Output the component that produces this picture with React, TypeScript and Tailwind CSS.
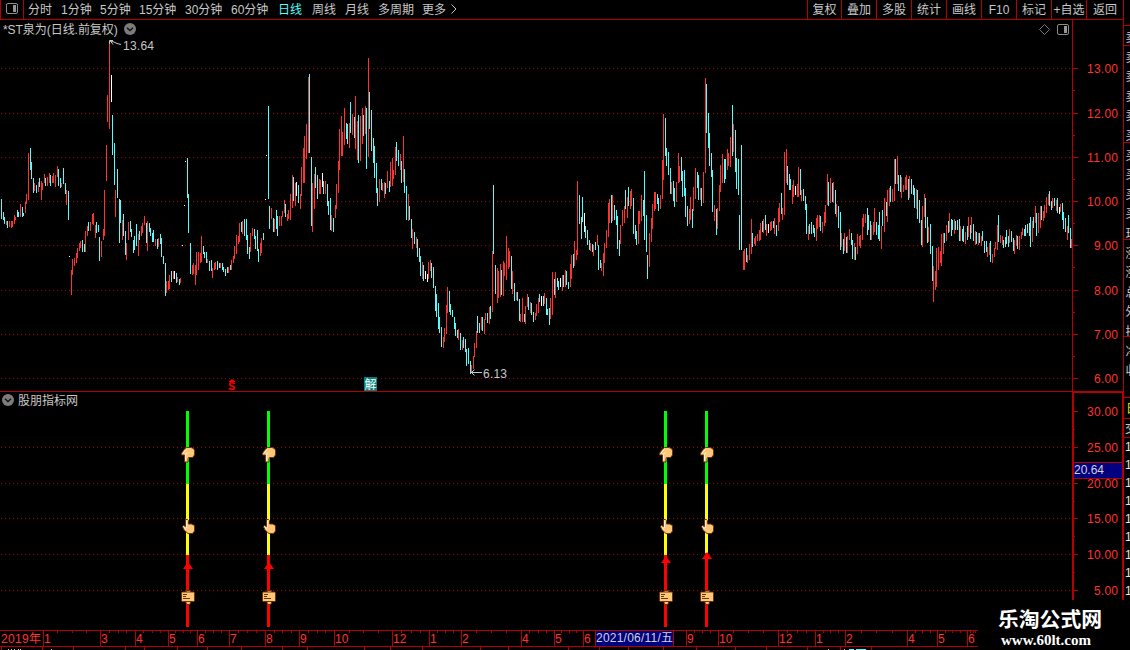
import React from "react";

type Tile = { ox: number; oy: number; data: string };

/* Daily bars: colour letter + column, high, low in thirds of a pixel from the tile origin. */
const TILES: Tile[] = [
  {
    ox: 0,
    oy: 30,
    data: "c4 507 567;c10 546 570;c13 562 582;r19 573 585;c22 573 594;r28 573 591;r34 573 594;r37 573 591;r43 555 582;r46 560 570;c52 540 560;c55 545 560;r61 522 560;c67 531 560;c70 548 558;r76 515 550;r79 491 521;r85 369 510;c91 354 420;c94 396 447;c100 444 489;r103 459 483;c109 465 489;r115 456 486;c118 444 472;r124 453 510;r127 459 480;r133 432 459;c136 444 468;r142 441 468;r148 429 459;c151 435 468;r157 438 459;r160 429 459;r166 435 471;r172 408 440;c175 417 468;c181 444 474;r184 459 472;c190 414 462;c196 459 492;r199 480 525;c205 483 570;w208 678 681;r214 720 795;r217 687 735;r223 684 708;r229 668 699;r232 654 684;r238 640 663;r241 633 654;c247 630 666;c253 642 665;r256 603 665;r262 588 618;c265 576 603;r271 576 603;r277 552 582;r280 549 585;r286 585 624;c289 576 609;c295 585 606;c298 621 693;r304 633 681;r310 597 630;r313 480 618;r319 345 453;r322 195 276;r328 40 297;w334 135 216;c337 255 375;c343 339 465;r346 480 561;c352 417 504;c358 507 639;c361 510 579;r367 570 630;c370 552 618;c376 603 675;r379 639 690;r385 576 630;c391 573 606;c394 597 621;c400 630 669;c403 618 660;c409 582 648;r415 612 678;c418 603 630;r424 588 618;r427 579 608;r433 558 585;c439 579 640;r442 573 663;c448 579 606;c451 594 618;c457 609 636;c460 600 636;r466 627 648;c472 627 657;r475 624 651;c481 612 642;c484 624 681;c490 678 702;c496 699 798;r499 753 789;r505 753 780;r508 735 777;c514 723 756;r520 723 747;w523 723 747;c529 729 759;r532 741 756;c538 747 765;r541 744 759;w547 645 648;w553 525 528;w556 393 396;c562 384 504;c565 492 609;c571 639 732;r577 706 735;r580 699 732;r586 705 765;r589 666 735;r595 666 720;r601 669 699;r604 618 696;c610 648 672;c613 666 684;c619 666 699;r622 687 699;c628 693 723;c634 690 723;r637 714 744;r643 699 720;r646 696 717;c652 693 720;c658 699 714;r661 699 714;c667 699 720;c670 711 726;c676 717 738;c682 711 729;r685 710 729;c691 705 720;r694 690 720;r700 678 699;r703 648 687;r709 615 672;r715 618 642;r718 579 636;c724 576 606;r727 573 612;c733 567 618;c739 567 630;c742 615 672;c748 651 687;r751 609 666;r757 594 618;c763 597 627;c766 618 657;c772 600 663;c775 657 696;r781 639 678;r784 624 669;c790 609 630;w796 507 510;w799 375 378;c805 228 507;c808 528 597;r814 534 567;c820 564 606;r823 567 606;c829 540 597;c832 558 618;r838 558 588",
  },
  {
    ox: 280,
    oy: 40,
    data: "r4 528 558;r7 513 531;r13 480 518;c16 492 531;r22 522 543;r25 510 537;r31 462 540;r37 405 504;c40 411 483;r46 429 498;w49 426 468;c55 435 489;r61 462 507;r64 381 468;r70 324 429;r73 288 429;r79 252 357;r85 111 339;c88 102 339;c94 351 558;r97 429 576;r103 402 507;c106 381 444;c112 405 477;r118 417 462;r121 420 462;w127 399 441;c130 423 462;r136 423 462;c142 432 498;c145 483 525;c151 474 570;r154 525 573;c160 534 576;r166 495 534;r169 432 507;r175 363 459;r178 267 390;r184 228 348;r187 276 348;r193 204 315;c199 249 297;c202 252 312;r208 249 324;c211 186 279;r217 222 285;c223 231 294;r226 168 327;r232 243 360;c235 225 369;r241 228 363;r247 204 312;c250 225 288;r256 198 282;c259 204 387;r265 54 351;c268 156 267;c274 210 333;c280 294 369;c283 318 414;c289 369 459;c292 444 498;r298 417 486;c304 417 450;r307 429 453;r313 426 474;c316 429 462;r322 393 444;c328 423 456;r331 366 441;r337 354 438;r340 390 417;r346 321 405;c349 306 363;c355 330 378;r361 342 390;c364 363 429;r370 288 426;c373 387 459;c379 438 540;r385 462 543;c388 498 540;c394 537 594;r397 567 627;c403 576 612;r409 591 624;c412 597 651;c418 624 666;c421 648 708;r427 666 717;c430 675 723;w436 693 717;w442 702 726;r445 666 717;r451 660 693;c454 669 714;c460 681 744;c466 738 813;c469 762 831;c475 789 867;c478 831 879;c484 861 921;r490 891 924;r493 864 906;r499 795 882;r502 741 819;c508 753 816;c511 792 825;c517 810 831;c523 831 867;c526 849 888;c532 870 894;r535 867 900;c541 879 930;r547 900 930;c550 891 924;c556 897 936;c559 927 978;c565 924 972;c571 963 1002;r574 975 1000;r580 948 987;r583 909 951;r589 873 924;c592 828 879;c598 849 879;r604 831 870;c607 831 873;r613 837 882;r616 819 840;c622 819 849;r628 801 852;c631 798 837;r637 633 816;c640 435 642;c646 675 762;r652 684 789;r655 693 774;r661 672 771;c664 690 765;r670 663 768;r673 669 708;r679 588 720;r685 624 687;r688 633 681;c694 648 747;r697 693 762;c703 729 783;r709 756 780;c712 756 783;c718 777 843;r721 822 846;r727 774 846;c733 822 846;r736 798 852;r742 762 801;c745 771 810;r751 786 819;c754 789 825;c760 816 846;r766 819 840;r769 792 828;r775 774 819;c778 762 786;w784 768 798;c790 768 798;r793 759 792;c799 774 825;c802 807 825;c808 804 855;r811 774 837;r817 696 825;c823 717 765;r826 696 774;c832 714 741;c835 723 750",
  },
  {
    ox: 540,
    oy: 60,
    data: "w61 654 681;r67 645 693;c70 645 681;r76 630 681;c79 633 675;c85 666 687;r91 612 681;r94 585 657;c100 582 624;r103 543 618;r109 570 600;r112 363 585;c118 405 492;c124 471 537;c127 411 486;w133 459 516;c136 498 534;c142 510 555;c148 540 570;r151 549 573;c157 552 576;r160 555 588;c166 546 570;r172 525 558;c175 555 630;c181 600 624;r184 609 633;r190 579 648;r193 549 609;r199 510 564;r205 429 531;r208 417 489;c214 405 489;r217 405 483;c223 435 480;c229 450 495;c232 468 567;c238 540 588;r241 495 552;r247 450 498;r253 438 489;c256 390 447;r262 411 474;c265 381 438;r271 393 447;r274 387 438;c280 414 522;c286 495 537;c289 513 555;r295 453 552;r298 453 492;r304 405 483;c310 420 468;c313 333 540;c319 465 576;c322 585 657;r328 519 621;r334 474 546;r337 432 507;r343 396 453;r346 396 447;c352 402 432;c355 414 453;r361 405 447;r367 300 417;r370 162 360;c376 174 288;c379 264 318;c385 276 345;c391 324 402;r394 366 402;c400 363 423;c403 384 441;r409 366 426;r415 279 369;r418 318 366;c424 291 363;c427 333 411;c433 330 408;c436 384 471;c442 438 498;r448 447 492;r451 411 480;c457 447 504;r460 381 453;r466 324 417;c472 336 384;c475 345 420;r481 384 420;c484 384 438;r490 336 429;r496 54 339;c499 72 219;c505 159 264;c508 219 318;c514 279 351;c517 330 456;r523 435 483;c529 447 525;r532 444 507;r538 375 453;r541 315 396;r547 282 369;c553 297 369;c556 297 357;r562 267 330;r565 279 318;r571 231 321;c577 135 288;r580 192 276;c586 210 336;c589 294 387;c595 297 405;c598 465 570;c604 255 570;r610 573 630;r613 567 630;c619 564 606;r622 585 609;r628 552 600;r634 477 582;c637 519 561;r643 534 552;r646 528 558;r652 522 543;r658 510 543;r661 489 540;c667 483 516;r670 477 519;c676 465 510;r679 492 528;w685 492 519;r691 486 513;r694 483 510;c700 483 504;r703 474 522;c709 495 528;r715 444 513;r718 429 486;c724 399 462;r727 444 480;r733 276 465;r739 267 369;c742 318 375;c748 342 390;c751 357 390;r757 375 432;r760 360 411;w766 378 405;r772 372 411;r775 321 411",
  },
  {
    ox: 800,
    oy: 130,
    data: "c1 117 195;r4 180 213;c10 177 213;c16 198 240;c19 222 312;r25 288 330;c28 282 312;c34 276 312;c40 285 309;c43 294 321;r49 264 333;r52 255 297;r58 255 291;c61 258 303;r67 276 309;r73 246 288;r76 225 279;r82 132 225;c85 156 228;r91 144 219;c97 159 216;r100 156 219;c106 180 252;r109 222 261;c115 228 294;c121 246 360;r124 309 351;c130 327 372;r133 309 363;c139 321 369;r142 318 369;r148 297 330;c154 309 345;c157 330 387;r163 339 390;c166 351 390;r172 312 372;r178 318 348;r181 315 354;r187 264 330;r190 252 291;r196 252 279;c202 234 315;c205 255 300;c211 273 330;r214 285 330;r220 276 315;r223 234 306;c229 276 315;c235 285 327;c238 246 333;r244 288 357;c247 240 288;r253 204 306;c259 216 258;r262 180 276;r268 174 228;c271 168 216;r277 177 216;r283 87 213;c286 87 162;r292 78 162;c295 135 183;c301 135 186;r304 141 204;r310 165 186;r316 141 180;r319 135 180;c325 147 210;r328 138 204;c334 147 192;c340 165 195;c343 174 234;r349 177 237;c352 180 267;c358 210 279;c364 270 345;r367 228 351;r373 192 261;c376 204 294;c382 261 339;r385 291 336;c391 282 372;c397 348 453;r400 408 516;r406 423 480;r409 354 471;r415 351 420;r421 363 399;r424 312 408;r430 309 372;c433 309 339;r439 285 333;c445 273 309;r448 249 306;c454 267 318;c457 270 300;r463 267 312;c466 273 300;c472 270 300;c478 267 333;r481 288 333;c487 297 333;c490 288 336;r496 306 342;c502 288 330;r505 261 321;c511 285 327;r514 261 309;c520 282 333;r526 303 345;c529 306 342;r535 309 345;c538 309 339;r544 318 348;c547 303 333;c553 333 369;c559 333 366;r562 351 381;r568 339 375;c571 333 396;r577 372 399;r583 354 381;r586 336 357;r592 285 360;c595 255 336;r601 315 339;r607 318 345;c610 330 354;c616 321 351;c619 300 342;c625 318 351;r628 297 339;c634 303 336;c640 324 363;r643 330 372;r649 315 348;c652 318 357;r658 318 360;r664 306 327;r667 294 315;c673 297 318;c676 285 318;c682 282 309;c688 279 318;c691 261 351;r697 273 336;c700 261 294;r706 228 279;c709 249 318;r715 249 309;r721 228 294;c724 228 270;r730 243 273;r733 225 264;r739 201 249;r745 192 225;c748 183 228;c754 213 240;r757 204 234;c763 204 228;r769 210 243;c772 204 249;w778 231 252;r781 222 246;c787 219 270;c790 246 297;c796 264 306;r802 288 330;c805 255 309;c811 294 354;r814 327 354",
  },
];

const COLORS: Record<string, string> = { c: "#54fcfc", r: "#ff3232", w: "#ffffff" };

const BARS = TILES.flatMap(({ ox, oy, data }) =>
  data.split(";").map((entry) => {
    const [x, top, bottom] = entry.slice(1).split(" ").map(Number);
    const y = oy + Math.round(top / 3);
    return { x: ox + Math.floor(x / 3), y, h: oy + Math.round(bottom / 3) - y, fill: COLORS[entry[0]] };
  }),
);

const PRICE_TICKS = [
  { y: 68, label: "13.00" },
  { y: 113, label: "12.00" },
  { y: 157, label: "11.00" },
  { y: 201, label: "10.00" },
  { y: 245, label: "9.00" },
  { y: 290, label: "8.00" },
  { y: 334, label: "7.00" },
  { y: 378, label: "6.00" },
];

const SIGNAL_TICKS = [
  { y: 411, label: "30.00" },
  { y: 447, label: "25.00" },
  { y: 483, label: "20.00" },
  { y: 518, label: "15.00" },
  { y: 554, label: "10.00" },
  { y: 590, label: "5.00" },
];

const SIGNALS = [
  { x: 186, arrow: 563, red: 555 },
  { x: 267, arrow: 563, red: 555 },
  { x: 664, arrow: 557, red: 555 },
  { x: 705, arrow: 553, red: 553 },
];

const MONTHS: [number, string][] = [
  [43, "1"], [100, "3"], [135, "4"], [168, "5"], [197, "6"], [229, "7"], [265, "8"], [299, "9"],
  [334, "10"], [392, "12"], [429, "1"], [461, "2"], [521, "4"], [554, "5"], [583, "6"],
  [686, "9"], [718, "10"], [778, "12"], [815, "1"], [845, "2"], [907, "4"], [937, "5"], [967, "6"],
];

const PERIODS = [
  { label: "分时", width: "w-[33px]" },
  { label: "1分钟", width: "w-[39px]" },
  { label: "5分钟", width: "w-[39px]" },
  { label: "15分钟", width: "w-[46px]" },
  { label: "30分钟", width: "w-[46px]" },
  { label: "60分钟", width: "w-[47px]" },
  { label: "日线", width: "w-[34px]", active: true },
  { label: "周线", width: "w-[33px]" },
  { label: "月线", width: "w-[33px]" },
  { label: "多周期", width: "w-[44px]" },
  { label: "更多", width: "w-[27px]" },
];

const ACTIONS = [
  { label: "复权", width: "w-[34px]" },
  { label: "叠加", width: "w-[35px]" },
  { label: "多股", width: "w-[35px]" },
  { label: "统计", width: "w-[35px]" },
  { label: "画线", width: "w-[35px]" },
  { label: "F10", width: "w-[35px]" },
  { label: "标记", width: "w-[35px]" },
  { label: "+自选", width: "w-[35px]" },
  { label: "返回", width: "w-[37px]" },
];

function PanelIcon() {
  return (
    <svg width="12" height="11" viewBox="0 0 12 11">
      <rect x="0.5" y="0.5" width="11" height="10" rx="1.5" fill="none" stroke="#8c8c8c" />
      <rect x="7" y="2" width="3" height="7" fill="#969696" />
    </svg>
  );
}

function Chevron() {
  return (
    <svg width="12" height="12" viewBox="0 0 12 12" className="shrink-0">
      <circle cx="6" cy="6" r="6" fill="#7c7c7c" />
      <path d="M3 4.8 6 7.6 9 4.8" fill="none" stroke="#111" strokeWidth="1.4" />
    </svg>
  );
}

function Toolbar() {
  return (
    <header className="flex h-5 shrink-0 border-b border-[#b40000] text-[#c8c8c8]">
      <div className="flex w-6 shrink-0 justify-center border-x border-[#b40000] pt-[3px] pr-px">
        <PanelIcon />
      </div>
      <nav className="flex flex-1 pt-px pl-1">
        {PERIODS.map((p) => (
          <span key={p.label} className={`${p.width} ${p.active ? "text-[#54fcfc]" : ""} shrink-0 whitespace-nowrap`}>
            {p.label}
          </span>
        ))}
        <svg className="mt-[3px] ml-0.5" width="6" height="10" viewBox="0 0 6 10">
          <path d="M0.5 0.5 5 5 0.5 9.5" fill="none" stroke="#c8c8c8" />
        </svg>
      </nav>
      <div className="flex w-[317px] shrink-0 border-r border-[#b40000]">
        {ACTIONS.map((a) => (
          <span key={a.label} className={`${a.width} shrink-0 border-l border-[#b40000] pt-px text-center whitespace-nowrap`}>
            {a.label}
          </span>
        ))}
      </div>
    </header>
  );
}

function DottedRow({ y }: { y: number }) {
  return <line x1="1" x2="1072" y1={y + 0.5} y2={y + 0.5} stroke="#a40000" strokeDasharray="1 3" />;
}

function AxisLabel({ y, label }: { y: number; label: string }) {
  return (
    <text x="1118" y={y + 5} textAnchor="end" fontSize="12" fill="#ff3232" textLength={label.length === 5 ? 31 : 24}>
      {label}
    </text>
  );
}

function PriceChart() {
  return (
    <section className="relative h-[372px] shrink-0">
      <svg width="1124" height="372" viewBox="0 20 1124 372" className="block">
        <g shapeRendering="crispEdges">
          {PRICE_TICKS.map((t) => (
            <React.Fragment key={t.y}>
              <DottedRow y={t.y} />
              <rect x="1073" y={t.y} width="5" height="1" fill="#b40000" />
              {t.y < 378 && <rect x="1073" y={t.y + 22} width="2" height="1" fill="#b40000" />}
            </React.Fragment>
          ))}
          {BARS.map((b, i) => (
            <rect key={i} x={b.x} y={b.y} width="1" height={b.h} fill={b.fill} />
          ))}
          <rect x="1072" y="20" width="1" height="372" fill="#b40000" />
          <rect x="1123" y="20" width="1" height="372" fill="#b40000" />
          <rect x="0" y="391" width="1124" height="1" fill="#b40000" />
          <rect x="364" y="377" width="13" height="14" fill="#008080" />
        </g>
        {PRICE_TICKS.map((t) => (
          <AxisLabel key={t.y} {...t} />
        ))}
        <path d="M109.500 44V40.500H113M110 41l4 1 3 1.500 4 1M110.500 41l2.500 3.500" fill="none" stroke="#c8c8c8" />
        <text x="123" y="50" fontSize="12" fill="#c8c8c8" textLength="31">13.64</text>
        <path d="M471 372.500H482M474.500 369.500l-3 3 3 3" fill="none" stroke="#c8c8c8" />
        <text x="483" y="378" fontSize="12" fill="#c8c8c8" textLength="24">6.13</text>
        <text x="228" y="389.500" fontSize="11" fontWeight="700" fill="#ff0000">S</text>
        <path d="M228.500 382l3.500-3 3.500 3z" fill="#ff0000" />
        <text x="364.500" y="388.500" fontSize="12" fill="#fff">解</text>
        <path d="M1044.500 24.500l5 5-5 5-5-5z" fill="none" stroke="#787878" />
      </svg>
      <div className="absolute top-px left-[3px] flex text-[#c8c8c8]">
        <span className="w-[121px] tracking-[-0.05px] whitespace-nowrap">*ST泉为(日线.前复权)</span>
        <span className="pt-0.5">
          <Chevron />
        </span>
      </div>
      <div className="absolute top-1 left-[1057px]">
        <PanelIcon />
      </div>
    </section>
  );
}

function HandDown({ x }: { x: number }) {
  return (
    <g transform={`translate(${x} 447)`}>
      <path d="M5.500 .5h4.500l2.500 1 1 2v4.500l-2 2.500H7.500l-.5 1V15H3.500V8L.5 8V6.500L3 2.500z" fill="#ffc878" stroke="#6e3208" />
      <path d="M1.500 6.500l4-4M4.500 14V7.500L6 5.500" stroke="#fff0dc" fill="none" />
    </g>
  );
}

function HandUp({ x }: { x: number }) {
  return (
    <g transform={`translate(${x + 1} 519)`}>
      <path d="M3.500.5h2l1 1v3.500h3l3 1.500v5.500l-2 2.500H6L2 11 .5 7.500l1-1 2 1z" fill="#ffc878" stroke="#6e3208" />
      <path d="M4.500 1.500V9M1.500 7.500l2.500 3" stroke="#fff0dc" fill="none" />
    </g>
  );
}

function Sign({ x }: { x: number }) {
  return (
    <g transform={`translate(${x} 590)`}>
      <path d="M5 .5h4.500v12.500l-1 1.500h-2.500l-1-1.500z" fill="#ffc878" stroke="#6e3208" />
      <rect x=".5" y="2" width="13" height="9.500" rx="1" fill="#ffc878" stroke="#6e3208" />
      <path d="M2 4.500h4M2 6.500h3M2 8.500h7" stroke="#6e3208" />
    </g>
  );
}

function SignalChart() {
  return (
    <section className="relative h-[238px] shrink-0">
      <svg width="1124" height="238" viewBox="0 392 1124 238" className="block">
        <g shapeRendering="crispEdges">
          {SIGNAL_TICKS.map((t) => (
            <React.Fragment key={t.y}>
              {t.y > 411 && <DottedRow y={t.y} />}
              <rect x="1074" y={t.y} width="4" height="1" fill="#b40000" />
              {t.y < 590 && <rect x="1074" y={t.y + 18} width="1" height="1" fill="#b40000" />}
            </React.Fragment>
          ))}
          <rect x="1072" y="391" width="2" height="209" fill="#b40000" />
          <rect x="1122" y="391" width="2" height="209" fill="#b40000" />
          <rect x="1072" y="391" width="52" height="2" fill="#b40000" />
          {SIGNALS.map((s) => (
            <React.Fragment key={s.x}>
              <rect x={s.x} y="411" width="3" height="73" fill="#00ff00" />
              <rect x={s.x} y="484" width="3" height={s.red - 484} fill="#ffff00" />
              <rect x={s.x} y={s.red} width="3" height={627 - s.red} fill="#ff0000" />
            </React.Fragment>
          ))}
        </g>
        {SIGNAL_TICKS.map((t) => (
          <AxisLabel key={t.y} {...t} />
        ))}
        <rect x="1074" y="462" width="48" height="17" fill="#b40000" />
        <rect x="1074" y="463" width="48" height="15" fill="#000080" />
        <text x="1074" y="474" fontSize="12" fill="#d2d2d2" textLength="30">20.64</text>
        {SIGNALS.map((s) => (
          <React.Fragment key={s.x}>
            <path d={`M${s.x + 2} ${s.arrow - 1}l5 7h-10z`} fill="#ff0000" />
            <HandDown x={s.x - 5} />
            <HandUp x={s.x - 5} />
            <Sign x={s.x - 5} />
          </React.Fragment>
        ))}
      </svg>
      <div className="absolute top-0 left-0.5 flex gap-1 text-[#c8c8c8]">
        <span className="pt-0.5">
          <Chevron />
        </span>
        <span>股朋指标网</span>
      </div>
    </section>
  );
}

function TimeAxis() {
  return (
    <svg width="978" height="20" viewBox="0 630 978 20" className="block shrink-0">
      <g shapeRendering="crispEdges" fill="#b40000">
        <rect x="0" y="630" width="978" height="1" />
        <rect x="0" y="646" width="978" height="1" />
        {MONTHS.map(([x], i) => {
          const next = MONTHS[i + 1]?.[0] ?? 978;
          const step = (next - x) / 4;
          return (
            <React.Fragment key={x}>
              <rect x={x} y="630" width="1" height="17" />
              {[1, 2, 3].map((k) => (
                <rect key={k} x={Math.round(x + step * k)} y="631" width="1" height="2" />
              ))}
            </React.Fragment>
          );
        })}
        {[1, 42, 73, 125, 144, 177, 207, 241, 282, 307, 364, 390, 422, 480, 508, 568, 599, 628, 663, 696, 735, 766, 807, 840, 871].map((x) => (
          <rect key={x} x={x} y="647" width="1" height="3" />
        ))}
      </g>
      <g shapeRendering="crispEdges" fill="#c8c8c8">
        {[8, 11, 14, 18, 20, 51, 828, 844].map((x) => (
          <rect key={x} x={x} y="649" width="1" height="1" />
        ))}
        <rect x="849" y="649" width="5" height="1" fill="#54fcfc" />
        <rect x="856" y="649" width="10" height="1" fill="#54fcfc" />
      </g>
      <text x="1" y="643" fontSize="12" fill="#ff3232" textLength="40">2019年</text>
      {MONTHS.map(([x, m]) => (
        <text key={x} x={x + 1} y="643" fontSize="12" fill="#ff3232">
          {m}
        </text>
      ))}
      <rect x="595" y="630" width="79" height="17" fill="#b40000" />
      <rect x="596" y="631" width="77" height="15" fill="#000080" />
      <text x="596" y="642" fontSize="12" fill="#d2d2d2" textLength="77">2021/06/11/五</text>
    </svg>
  );
}

function SideStrip() {
  const names = "卖卖卖卖卖买买买买买现涨涨总外换净收".split("");
  return (
    <aside className="h-[600px] w-1.5 shrink-0 overflow-hidden">
      <svg width="6" height="600" viewBox="1124 0 6 600" className="block">
        {names.map((n, i) => (
          <text key={i} x="1125.500" y={42 + i * 19.600} fontSize="12" fill="#c8c8c8">
            {n}
          </text>
        ))}
        <text x="1126" y="413" fontSize="12" fill="#e6e600">日</text>
        <text x="1125" y="433" fontSize="12" fill="#c8c8c8">交</text>
        {Array.from({ length: 9 }, (_, i) => (
          <text key={i} x="1125" y={451 + i * 18} fontSize="12" fill="#e6e6e6">1</text>
        ))}
        {[25, 45, 142, 239, 336, 397, 418, 437].map((y) => (
          <rect key={y} x="1124" y={y} width="6" height="1" fill="#b40000" />
        ))}
      </svg>
    </aside>
  );
}

export default function App() {
  return (
    <main className="flex h-[650px] w-[1130px] flex-col overflow-hidden bg-black font-['Liberation_Sans','Noto_Sans_CJK_SC',sans-serif] text-[12px] leading-[18px]">
      <div className="flex h-[630px] shrink-0">
        <div className="flex w-[1124px] shrink-0 flex-col">
          <Toolbar />
          <PriceChart />
          <SignalChart />
        </div>
        <SideStrip />
      </div>
      <div className="flex h-5">
        <TimeAxis />
        <div className="relative flex-1">
          <div className="absolute right-0 bottom-0 flex h-[50px] w-[152px] flex-col items-start bg-black pt-[7px] pl-5 text-white">
            <span className="text-[20.8px] leading-[26px] font-bold whitespace-nowrap">乐淘公式网</span>
            <span className="ml-[3px] font-['Liberation_Serif',serif] text-[15px] leading-[14px] font-bold">www.60lt.com</span>
          </div>
        </div>
      </div>
    </main>
  );
}
